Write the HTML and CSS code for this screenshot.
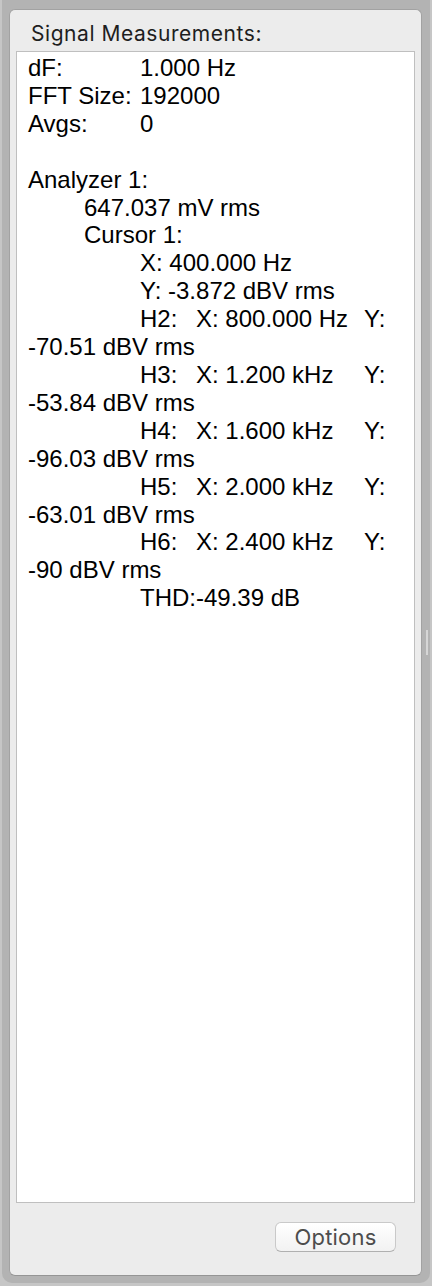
FILE: index.html
```html
<!DOCTYPE html>
<html>
<head>
<meta charset="utf-8">
<title>Signal Measurements</title>
<link rel="stylesheet" href="styles.css">
</head>
<body>
<div class="frame">
  <div class="panel">
    <div class="title">Signal Measurements:</div>
    <div class="textbox"><div class="readout">dF:		1.000 Hz
FFT Size:	192000
Avgs:	0

Analyzer 1:
	647.037 mV rms
	Cursor 1:
		X: 400.000 Hz
		Y: -3.872 dBV rms
		H2:	X: 800.000 Hz	Y: -70.51 dBV rms
		H3:	X: 1.200 kHz	Y: -53.84 dBV rms
		H4:	X: 1.600 kHz	Y: -96.03 dBV rms
		H5:	X: 2.000 kHz	Y: -63.01 dBV rms
		H6:	X: 2.400 kHz	Y: -90 dBV rms
		THD:-49.39 dB</div></div>
    <div class="footer">
      <button class="btn">Options</button>
    </div>
  </div>
  <div class="grip"></div>
</div>
</body>
</html>
```

FILE: styles.css
```css
html, body {
  margin: 0;
  padding: 0;
}
body {
  width: 432px;
  height: 1286px;
  background: #c6c6c6;
  overflow: hidden;
}
.frame {
  position: relative;
  box-sizing: border-box;
  margin: 0 2px;
  height: 1283px;
  padding: 9px 8px 7px 7px;
  background: #b3b3b3;
  border-radius: 0 0 10px 10px;
  display: flex;
  flex-direction: column;
}
.panel {
  flex: 1;
  display: flex;
  flex-direction: column;
  background: #ececec;
  border: 1px solid #a2a2a2;
  border-bottom-color: #959595;
  border-radius: 6px;
  min-height: 0;
}
.title {
  margin: 11px 0 4px 0;
  padding-left: 21px;
  height: 26px;
  line-height: 26px;
  font-family: "Inter", "Liberation Sans", sans-serif;
  font-size: 21px;
  letter-spacing: 0.55px;
  color: #1e1e1e;
}
.textbox {
  flex: 1;
  min-height: 0;
  margin: 0 6px;
  background: #ffffff;
  border: 1px solid #bfbfbf;
  overflow: hidden;
  padding: 2px 0 0 11px;
}
.readout {
  font-family: "Liberation Sans", Arial, sans-serif;
  font-size: 24px;
  line-height: 27.9px;
  color: #000;
  white-space: pre-wrap;
  tab-size: 56px;
  -moz-tab-size: 56px;
}
.footer {
  height: 72px;
  flex: none;
  display: flex;
  justify-content: flex-end;
  align-items: flex-start;
  padding: 19px 25px 0 0;
  box-sizing: border-box;
}
.btn {
  width: 121px;
  height: 30px;
  padding: 0;
  border: 1px solid #c9c9c9;
  border-bottom-color: #b0b0b0;
  border-radius: 6px;
  background: linear-gradient(#ffffff, #f2f2f2);
  font-family: "Inter", "Liberation Sans", sans-serif;
  font-size: 22px;
  letter-spacing: 0.2px;
  line-height: 28px;
  color: #4d4d4d;
}
.grip {
  position: absolute;
  right: 2px;
  top: 630px;
  width: 2px;
  height: 25px;
  background: #d6d6d6;
}
```
